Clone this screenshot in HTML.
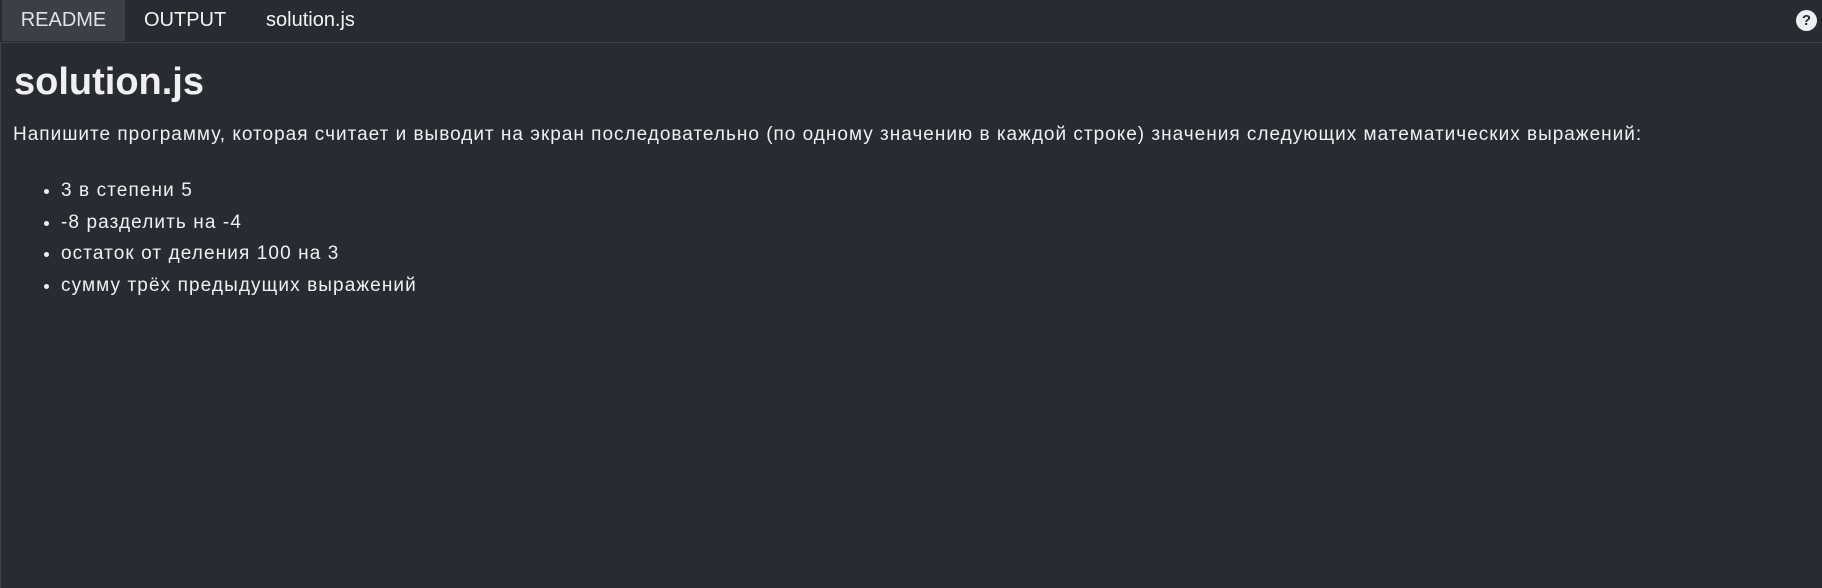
<!DOCTYPE html>
<html><head><meta charset="utf-8"><style>
html,body{margin:0;padding:0;width:1822px;height:588px;overflow:hidden;background:#282c32;font-family:"Liberation Sans",sans-serif;color:#f0f0f3}
.bar{position:absolute;left:0;top:0;width:1822px;height:42px;border-bottom:1px solid #3c4047;background:#282c32}
.tab{position:absolute;top:0;height:41px;line-height:41px;font-size:20px;color:#f4f4f6}
.t1{left:2px;width:123px;background:#3b4048;text-align:center;color:#dfe3ea}
.t2{left:144px}.t3{left:266px}
.q{position:absolute;right:5px;top:10px;width:21px;height:21px;border-radius:50%;background:#eeeff3;color:#282c32;font-weight:bold;font-size:15px;text-align:center;line-height:21px}
.lb{position:absolute;left:0;top:43px;width:1px;height:545px;background:#3c4047}
h1{position:absolute;left:14px;top:59px;margin:0;font-size:38px;font-weight:bold;line-height:46px}
p{position:absolute;left:13px;top:122px;margin:0;font-size:19px;letter-spacing:1.0px;line-height:26px;white-space:nowrap}
ul{position:absolute;left:0;top:175px;margin:0;padding-left:61px;font-size:19px;letter-spacing:1.1px;line-height:31.5px}
</style></head><body>
<div class="bar"><div class="tab t1">README</div><div class="tab t2">OUTPUT</div><div class="tab t3">solution.js</div><div class="q">?</div></div>
<div class="lb"></div>
<h1>solution.js</h1>
<p>Напишите программу, которая считает и выводит на экран последовательно (по одному значению в каждой строке) значения следующих математических выражений:</p>
<ul><li>3 в степени 5</li><li>-8 разделить на -4</li><li>остаток от деления 100 на 3</li><li>сумму трёх предыдущих выражений</li></ul>
</body></html>
